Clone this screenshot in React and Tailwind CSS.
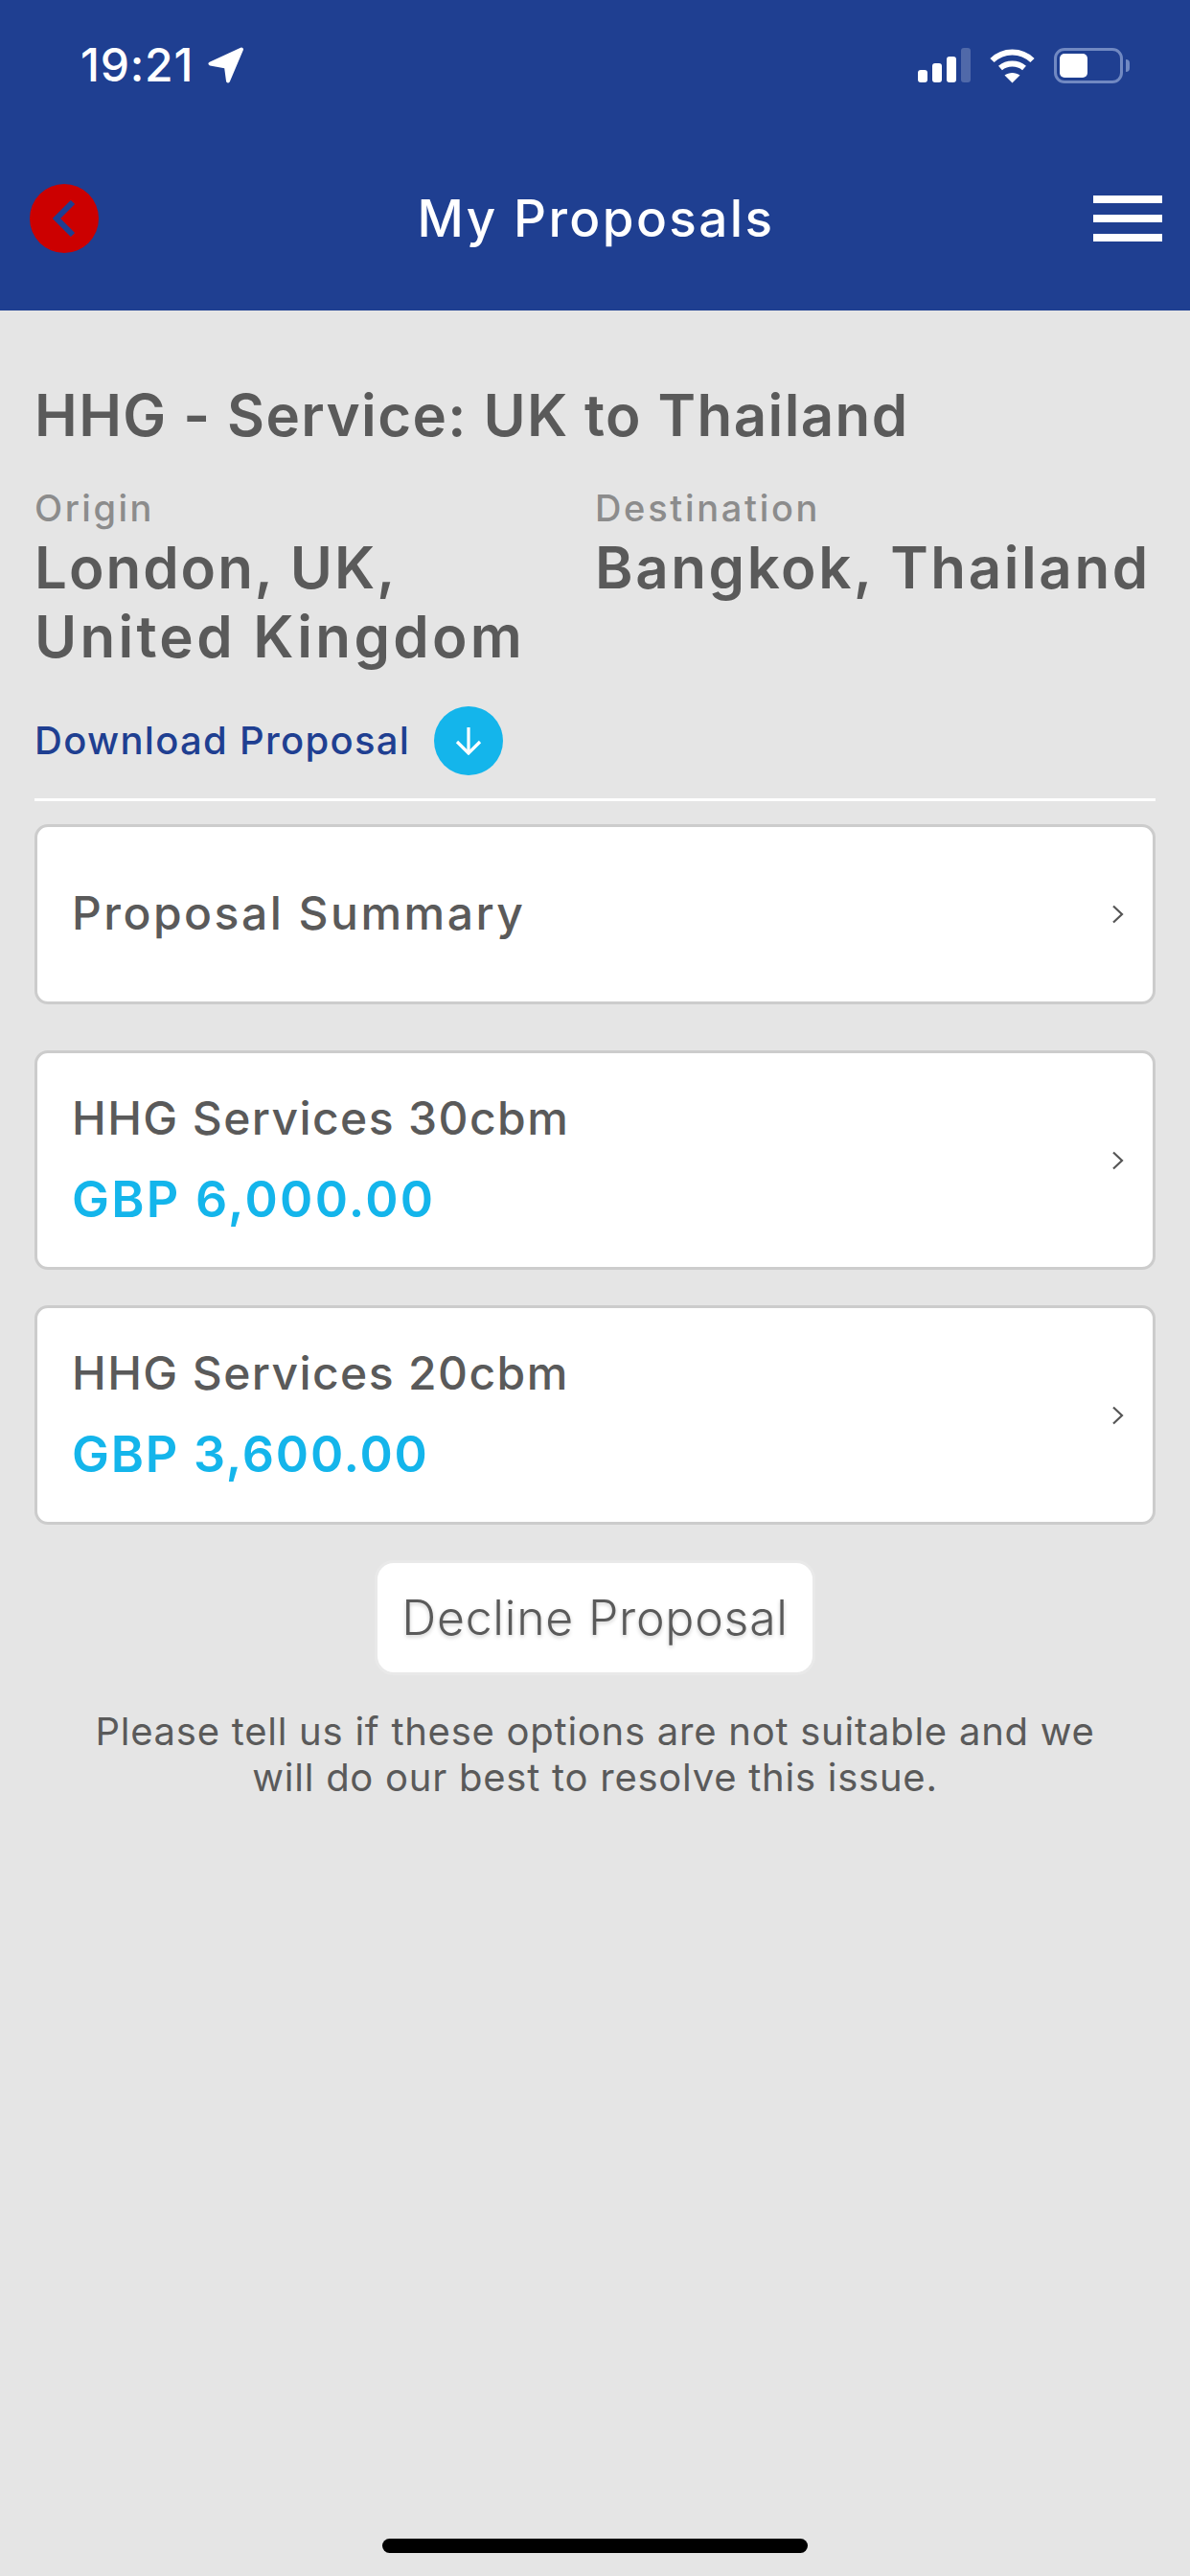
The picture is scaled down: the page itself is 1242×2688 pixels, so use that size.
import React from "react";

function Chevron() {
  return (
    <svg width="14" height="20" viewBox="0 0 14 20" fill="none" className="shrink-0">
      <path d="M2 1.5 L11 10 L2 18.5" stroke="#555" strokeWidth="2.2" />
    </svg>
  );
}

function Card({ title, price, priceClass }) {
  return (
    <div className="h-[229px] rounded-[14px] border-[3px] border-[#cccccc] bg-white pl-[36px] pr-[29px] flex items-center justify-between">
      <div className="flex flex-col">
        <div className="text-[48px] leading-[60px] font-medium text-[#5a5a5a] tracking-[1.4px] -mt-[3px]">{title}</div>
        <div className={priceClass}>{price}</div>
      </div>
      <Chevron />
    </div>
  );
}

export default function App() {
  return (
    <div className="w-[1242px] min-h-[2688px] bg-[#e5e5e5] flex flex-col font-['Inter',sans-serif]">
      <header className="h-[324px] bg-[#1f3f91] text-white">
        <div className="h-[136px] flex items-center justify-between pl-[84px] pr-[63px]">
          <div className="flex items-center gap-[15px]">
            <span className="text-[48px] leading-[56px] font-medium tracking-[0.8px]">19:21</span>
            <svg width="38" height="38" viewBox="0 0 38 38" fill="white">
              <path d="M35 2.5 L2.5 17.5 L19 20.5 L21 35.5 Z" stroke="white" strokeWidth="4" strokeLinejoin="round" />
            </svg>
          </div>
          <div className="flex items-center gap-[20px]">
            <svg width="55" height="36" viewBox="0 0 55 36" fill="white">
              <rect x="0" y="23" width="10" height="13" rx="3" />
              <rect x="15" y="16" width="10" height="20" rx="3" />
              <rect x="30" y="9" width="10" height="27" rx="3" />
              <rect x="45" y="0" width="10" height="36" rx="3" opacity="0.22" />
            </svg>
            <svg width="47" height="37" viewBox="0 0 47 37" fill="none" stroke="white" strokeWidth="6">
              <path d="M2.5 13 C14 1.5 33 1.5 44.5 13" />
              <path d="M11 21 C18 15 29 15 36 21" />
              <path d="M23.5 36.5 L15.5 28.5 C20 25 27 25 31.5 28.5 Z" fill="white" stroke="none" />
            </svg>
            <div className="flex items-center">
              <div className="w-[72px] h-[37px] rounded-[11px] border-[3px] border-[#7189c2] p-[3px]">
                <div className="w-[29px] h-full rounded-[5px] bg-white" />
              </div>
              <div className="ml-[3px] w-[4px] h-[13px] rounded-r-[4px] bg-[#7189c2]" />
            </div>
          </div>
        </div>
        <div className="mt-[32px] h-[120px] flex items-center justify-between pl-[31px] pr-[29px]">
          <div className="w-[72px] h-[72px] rounded-full bg-[#cc0000] flex items-center justify-center">
            <svg width="24" height="38" viewBox="0 0 24 38" fill="none">
              <path d="M21 2 L4 19 L21 36" stroke="#1f3f91" strokeWidth="6" />
            </svg>
          </div>
          <div className="text-[53px] leading-[64px] font-medium tracking-[2.4px]">My Proposals</div>
          <div className="w-[72px] flex flex-col gap-[12px]">
            <div className="h-[8px] bg-white" />
            <div className="h-[8px] bg-white" />
            <div className="h-[8px] bg-white" />
          </div>
        </div>
      </header>

      <main className="flex-1 flex flex-col px-[36px]">
        <h1 className="mt-[73px] text-[60px] leading-[72px] font-semibold text-[#5a5a5a] tracking-[1.4px]">HHG - Service: UK to Thailand</h1>
        <div className="mt-[37px] grid grid-cols-2">
          <div>
            <div className="text-[38px] leading-[48px] font-medium text-[#8c8c8c] tracking-[2.5px]">Origin</div>
            <div className="mt-[2px] text-[60px] leading-[72px] font-semibold text-[#5a5a5a]">
              <div className="tracking-[2px]">London, UK,</div>
              <div className="tracking-[3.3px]">United Kingdom</div>
            </div>
          </div>
          <div>
            <div className="text-[38px] leading-[48px] font-medium text-[#8c8c8c] tracking-[2.7px]">Destination</div>
            <div className="mt-[2px] text-[60px] leading-[72px] font-semibold text-[#5a5a5a] tracking-[2.6px]">Bangkok, Thailand</div>
          </div>
        </div>
        <div className="mt-[37px] h-[72px] flex items-center gap-[25px]">
          <span className="text-[40px] leading-[48px] font-medium text-[#1f3f91] tracking-[1.3px]">Download Proposal</span>
          <div className="w-[72px] h-[72px] rounded-full bg-[#14b5eb] flex items-center justify-center">
            <svg width="30" height="30" viewBox="0 0 30 30" fill="none" stroke="white" strokeWidth="3.2">
              <path d="M15 1 V28" />
              <path d="M3 16 L15 28 L27 16" />
            </svg>
          </div>
        </div>
        <div className="mt-[24px] h-[3px] bg-white" />
        <div className="mt-[24px] h-[188px] rounded-[14px] border-[3px] border-[#cccccc] bg-white pl-[36px] pr-[29px] flex items-center justify-between">
          <div className="text-[48px] leading-[60px] font-medium text-[#5a5a5a] tracking-[2.5px] -mt-[2px]">Proposal Summary</div>
          <Chevron />
        </div>
        <div className="mt-[48px]">
          <Card title="HHG Services 30cbm" price="GBP 6,000.00" priceClass="mt-[25px] text-[52px] leading-[60px] font-semibold text-[#14b5eb] tracking-[2.3px]" />
        </div>
        <div className="mt-[37px]">
          <Card title="HHG Services 20cbm" price="GBP 3,600.00" priceClass="mt-[25px] text-[52px] leading-[60px] font-semibold text-[#14b5eb] tracking-[1.8px]" />
        </div>
        <div className="mt-[37px] flex justify-center">
          <div className="w-[460px] h-[120px] rounded-[20px] border-[3px] border-[#e9e9e9] bg-white flex items-center justify-center text-[50px] leading-[60px] font-light text-[#5a5a5a] tracking-[0.75px] [text-shadow:0_2px_4px_rgba(0,0,0,0.2)]">
            Decline Proposal
          </div>
        </div>
        <p className="mt-[35px] text-center text-[40px] leading-[48px] text-[#5a5a5a] tracking-[0.75px]">
          Please tell us if these options are not suitable and we<br />will do our best to resolve this issue.
        </p>
        <div className="mt-auto mb-[24px] self-center w-[444px] h-[15px] rounded-full bg-black" />
      </main>
    </div>
  );
}
